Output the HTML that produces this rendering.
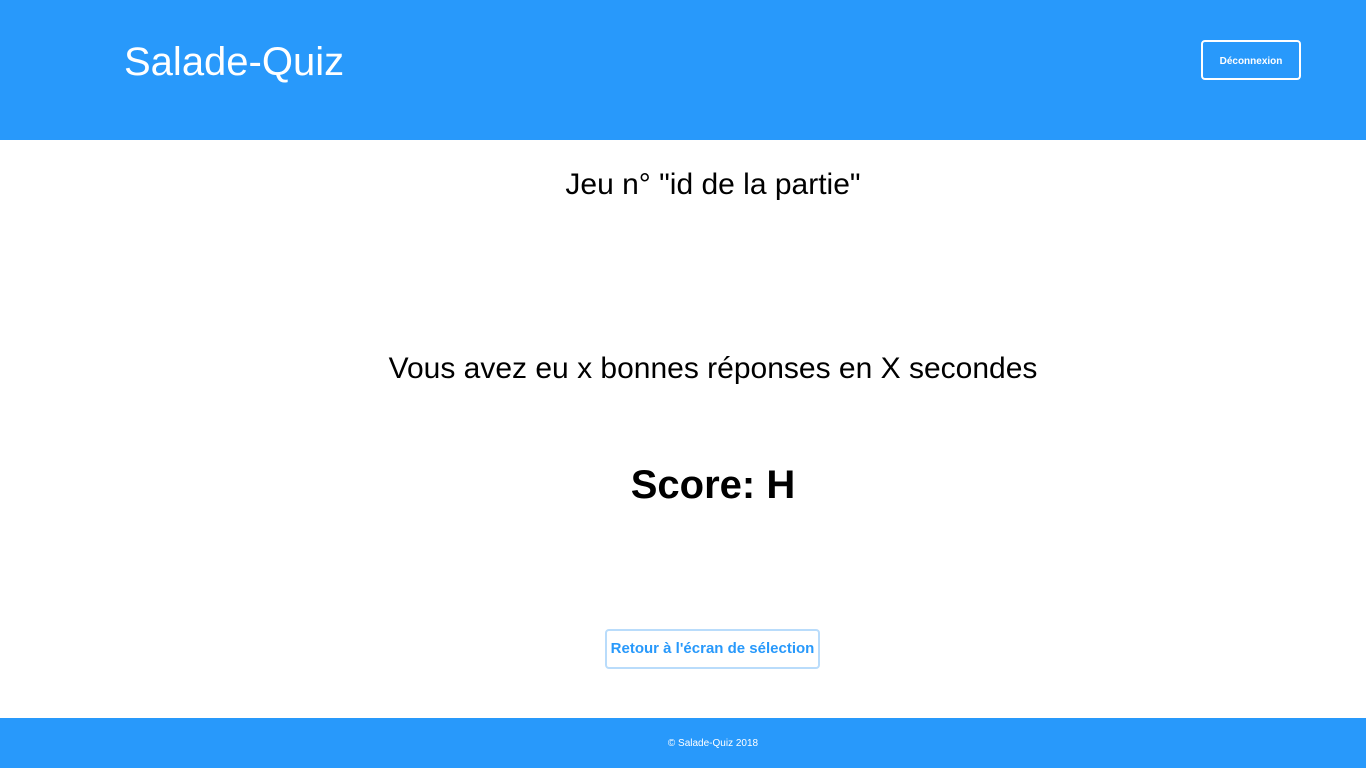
<!DOCTYPE html>
<html><head><meta charset="utf-8"><style>
*{margin:0;padding:0;box-sizing:border-box}
body{width:1366px;height:768px;font-family:"Liberation Sans",sans-serif;background:#fff;position:relative;overflow:hidden}
header{position:absolute;left:0;top:0;width:1366px;height:140px;background:#2899fb}
.logo{position:absolute;left:124px;top:40px;color:#fff;font-size:40px}
.btn{position:absolute;left:1201px;top:40px;width:100px;height:40px;border:2px solid #fff;border-radius:4px;color:#fff;font-size:10px;font-weight:bold;display:flex;align-items:center;justify-content:center;padding-top:2px}
.t{position:absolute;left:30px;width:1366px;text-align:center;color:#000}
.back{position:absolute;left:605px;top:629px;width:215px;height:40px;border:2px solid #b9dcfb;border-radius:4px;color:#2899fb;font-weight:bold;font-size:15px;display:flex;align-items:center;justify-content:center;padding-bottom:2px}
footer{position:absolute;left:0;top:718px;width:1366px;height:50px;background:#2899fb;color:#fff;font-size:10px}
footer span{position:absolute;left:30px;width:1366px;text-align:center;top:20px}
</style></head><body>
<header><div class="logo">Salade-Quiz</div><div class="btn">Déconnexion</div></header>
<div class="t" style="top:168px;font-size:30px">Jeu n° "id de la partie"</div>
<div class="t" style="top:352px;font-size:30px">Vous avez eu x bonnes réponses en X secondes</div>
<div class="t" style="top:463px;font-size:40px;font-weight:bold">Score: H</div>
<div class="back">Retour à l'écran de sélection</div>
<footer><span>© Salade-Quiz 2018</span></footer>
</body></html>
